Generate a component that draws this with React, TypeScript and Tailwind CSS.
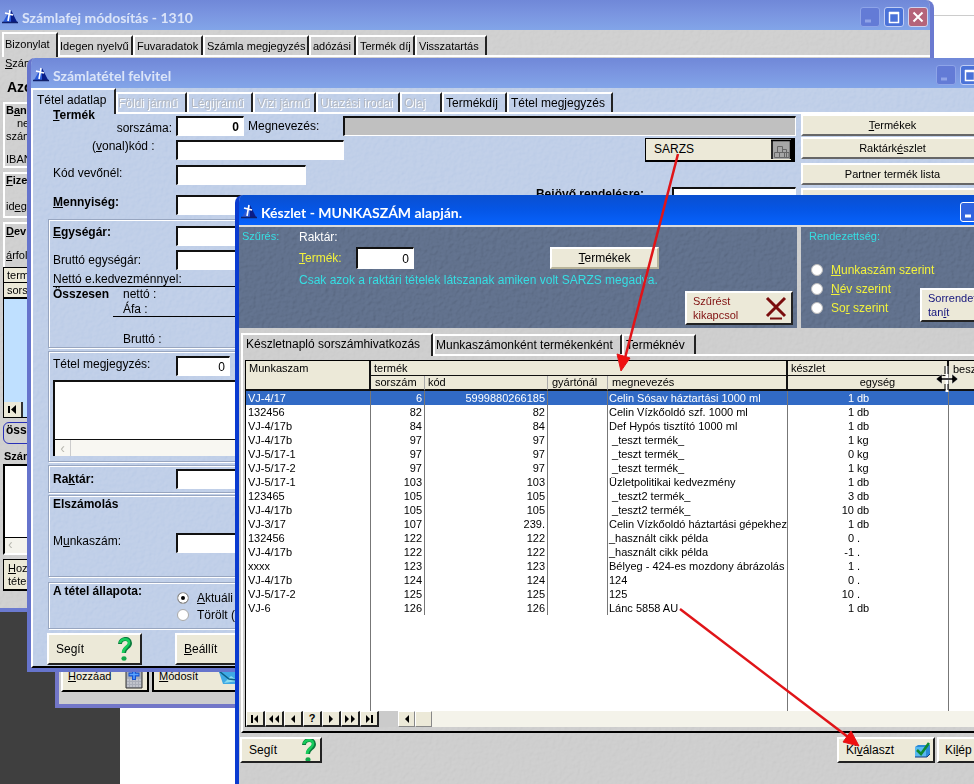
import { useState } from 'react';
import type { ReactNode } from 'react';
import clsx from 'clsx';

type StockRow = {
  job: string;
  no: string;
  code: string;
  name: string;
  qty: string;
  unit: string;
};

const rows: StockRow[] = [
  { job: 'VJ-4/17', no: '6', code: '5999880266185', name: 'Celin Sósav háztartási 1000 ml', qty: '1', unit: 'db' },
  { job: '132456', no: '82', code: '82', name: 'Celin Vízkőoldó szf. 1000 ml', qty: '1', unit: 'db' },
  { job: 'VJ-4/17b', no: '84', code: '84', name: 'Def Hypós tisztító 1000 ml', qty: '1', unit: 'db' },
  { job: 'VJ-4/17b', no: '97', code: '97', name: ' _teszt termék_', qty: '1', unit: 'kg' },
  { job: 'VJ-5/17-1', no: '97', code: '97', name: ' _teszt termék_', qty: '0', unit: 'kg' },
  { job: 'VJ-5/17-2', no: '97', code: '97', name: ' _teszt termék_', qty: '1', unit: 'kg' },
  { job: 'VJ-5/17-1', no: '103', code: '103', name: 'Üzletpolitikai kedvezmény', qty: '1', unit: 'db' },
  { job: '123465', no: '105', code: '105', name: ' _teszt2 termék_', qty: '3', unit: 'db' },
  { job: 'VJ-4/17b', no: '105', code: '105', name: ' _teszt2 termék_', qty: '10', unit: 'db' },
  { job: 'VJ-3/17', no: '107', code: '239.', name: 'Celin Vízkőoldó háztartási gépekhez', qty: '1', unit: 'db' },
  { job: '132456', no: '122', code: '122', name: '_használt cikk példa', qty: '0', unit: '.' },
  { job: 'VJ-4/17b', no: '122', code: '122', name: '_használt cikk példa', qty: '-1', unit: '.' },
  { job: 'xxxx', no: '123', code: '123', name: 'Bélyeg - 424-es mozdony ábrázolás', qty: '1', unit: '.' },
  { job: 'VJ-4/17b', no: '124', code: '124', name: '124', qty: '0', unit: '.' },
  { job: 'VJ-5/17-2', no: '125', code: '125', name: '125', qty: '10', unit: '.' },
  { job: 'VJ-6', no: '126', code: '126', name: 'Lánc 5858 AU', qty: '1', unit: 'db' },
];

const raised =
  'bg-[#ece9d8] border-t-2 border-l-2 border-white border-r-2 border-b-2 border-r-[#222] border-b-[#222]';
const sunken =
  'bg-white border-t-2 border-l-2 border-t-[#111] border-l-[#111] border-r border-b border-r-white border-b-white rounded-none px-1 outline-none';

// embossed paper look of the window backgrounds
function Texture({ id }: { id: string }) {
  return (
    <svg className="absolute inset-0 -z-10 h-full w-full opacity-15 mix-blend-overlay" aria-hidden="true">
      <filter id={id}>
        <feTurbulence type="fractalNoise" baseFrequency="0.25" numOctaves="2" seed="4" />
        <feDiffuseLighting lightingColor="#fff" surfaceScale="1.5" diffuseConstant="0.7">
          <feDistantLight azimuth="225" elevation="45" />
        </feDiffuseLighting>
      </filter>
      <rect width="100%" height="100%" filter={`url(#${id})`} />
    </svg>
  );
}

function AppIcon() {
  return (
    <svg width="16" height="16" viewBox="0 0 16 16" className="shrink-0">
      <path d="M8 1 L15 13 L1 13 Z" fill="#2a5ad8" />
      <path d="M9 1 L15 13 L9 13 Z" fill="#0a1d88" />
      <path d="M8 1 L6 12 M3 4 L11 6" stroke="#fff" strokeWidth="1.6" />
      <path d="M0 13.5 H16" stroke="#10206a" strokeWidth="1.5" />
    </svg>
  );
}

function QuestionIcon() {
  return (
    <svg width="14" height="25" viewBox="0 0 14 25" className="shrink-0">
      <path d="M2 7 C2 1 12 0 12 6 C12 11 6 10 6 16" fill="none" stroke="#0a7a3c" strokeWidth="4" />
      <path d="M2 6 C3 1 11 1 11 6 C11 10 5 10 5 16" fill="none" stroke="#18cc5c" strokeWidth="2.6" />
      <ellipse cx="6" cy="21.5" rx="2.6" ry="2.2" fill="#12a84a" />
    </svg>
  );
}

function CheckIcon() {
  return (
    <svg width="17" height="16" viewBox="0 0 17 16" className="shrink-0">
      <path d="M1 5 L4 3 H16 V12 L13 15 H1 Z" fill="#2a8ad8" />
      <path d="M1 5 H12 V15 H1 Z" fill="#58b8f0" />
      <path d="M1 15 H13 L16 12" fill="none" stroke="#123c80" />
      <path d="M3 8 L7 12 L15 1" fill="none" stroke="#0c8a30" strokeWidth="2.6" />
    </svg>
  );
}

function WindowButton({ kind, active }: { kind: 'min' | 'max' | 'close'; active?: boolean }) {
  return (
    <button
      type="button"
      aria-label={kind}
      className={clsx(
        'size-5 shrink-0 rounded-[3px] border flex items-center justify-center',
        active ? 'border-white bg-[#2f64e0]' : kind === 'close' ? 'border-[#d0d4f0] bg-[#b5647a]' : kind === 'max' ? 'border-[#c0cdf4] bg-[#4a72d8]' : 'border-[#8ea4e8] bg-[#637bd6]',
      )}
    >
      <svg width="14" height="14" viewBox="0 0 14 14" fill="none" stroke={kind === 'min' && !active ? '#90a4e8' : '#fff'}>
        {kind === 'min' && <path d="M2 11 H8" strokeWidth="3" />}
        {kind === 'max' && <path d="M2 3 H12 M2.5 2 V12.5 H11.5 V2" strokeWidth="1.5" />}
        {kind === 'max' && <path d="M2 3 H12" strokeWidth="2.5" />}
        {kind === 'close' && <path d="M2.5 2.5 L11.5 11.5 M11.5 2.5 L2.5 11.5" strokeWidth="2" />}
      </svg>
    </button>
  );
}

function TitleBar({ title, active }: { title: string; active?: boolean }) {
  return (
    <div
      className={clsx(
        'flex h-[30px] shrink-0 items-center gap-1 pt-1 pl-[2px] font-[Lato,sans-serif] text-[14px] font-bold',
        active
          ? 'bg-linear-to-b from-[#0a4fd0] via-[#0556e6] to-[#0762fc] text-white'
          : 'bg-linear-to-b from-[#7088d8] via-[#7b96e1] to-[#82a5e8] text-[#dbe4f8]',
      )}
    >
      <AppIcon />
      <h2 className="flex-1 whitespace-nowrap">{title}</h2>
      <div className="flex gap-1 pr-[2px]">
        <WindowButton kind="min" active={active} />
        <WindowButton kind="max" active={active} />
        <WindowButton kind="close" />
      </div>
    </div>
  );
}

function Tab({ children, className, disabled, small }: { children: ReactNode; className: string; disabled?: boolean; small?: boolean }) {
  return (
    <button
      type="button"
      disabled={disabled}
      className={clsx(
        'h-5 shrink-0 whitespace-nowrap border-t-2 border-l-2 border-r-2 border-white border-r-[#222] text-left leading-4',
        small ? 'text-[11px]' : 'text-[12px]',
        disabled && 'text-[#b3b9c3] [text-shadow:1px_1px_0_#fff]',
        className,
      )}
    >
      {children}
    </button>
  );
}

function InvoiceHeadWindow() {
  return (
    <section className="absolute top-0 right-10 left-0 isolate flex h-[612px] flex-col overflow-hidden rounded-tr-lg border-r-4 border-b-4 border-[#6b7ad0] bg-[#cdcdcd]">
      <Texture id="tex-head" />
      <TitleBar title="Számlafej módosítás - 1310" />
      <div className="flex h-[27px] shrink-0 pt-[2px] pl-[2px]">
        <button type="button" className="flex w-[56px] items-start border-t-2 border-l-2 border-r-2 border-white border-r-[#222] pl-px text-left text-[11px] leading-5">
          Bizonylat
        </button>
        <div className="flex flex-1 items-end border-b-2 border-white">
          <Tab small className="w-[75px]">Idegen nyelvű</Tab>
          <Tab small className="w-[70px] pl-[2px]">Fuvaradatok</Tab>
          <Tab small className="w-[106px] pl-[2px]">Számla megjegyzés</Tab>
          <Tab small className="w-[47px] pl-[2px]">adózási</Tab>
          <Tab small className="w-[59px] pl-[2px]">Termék díj</Tab>
          <Tab small className="w-[72px] pl-[2px]">Visszatartás</Tab>
        </div>
      </div>
      <div className="flex w-20 flex-col pl-[3px]">
        <p className="h-[22px] pl-[2px] leading-3"><u>S</u>zám</p>
        <p className="h-[23px] pl-1 text-[14px] font-bold leading-4">Azo</p>
        <div className="flex h-[66px] flex-col border-2 border-white leading-[13px]">
          <b className="pl-px">B<u>a</u>nk</b>
          <span className="pl-3">nev</span>
          <span className="h-[23px] pl-px">szám</span>
          <span className="pl-px">IBAN</span>
        </div>
        <div className="mt-1 flex h-[46px] flex-col border-2 border-white leading-[13px]">
          <b className="h-[26px] pl-px"><u>F</u>izet</b>
          <span className="pl-px">id<u>e</u>ge</span>
        </div>
        <div className="mt-1 flex h-[45px] flex-col border-2 border-b-0 border-white leading-[14px]">
          <b className="h-[24px] pl-px"><u>D</u>evi</b>
          <span className="pl-px"><u>á</u>rfol</span>
        </div>
        <div className="flex h-[151px] flex-col border border-black bg-[#bfe0ff]">
          <div className="border-b border-black bg-[#ece9d8] pl-[3px] leading-[14px]">termék</div>
          <div className="border-b-2 border-black bg-[#ece9d8] pl-[3px] leading-[14px]">sorsz</div>
          <span className="flex-1" />
          <button type="button" aria-label="első" className="h-[15px] w-[19px] border-r-2 border-[#333] bg-[#ece9d8]">
            <svg width="12" height="9" viewBox="0 0 12 9" className="mx-auto"><path d="M2 1V8" stroke="#000" strokeWidth="2" /><path d="M9 0V9L4 4.500Z" /></svg>
          </button>
        </div>
        <b className="mt-1 h-[22px] rounded-md border border-[#2830b8] pl-[2px] text-[12px] leading-[14px]">össz</b>
        <b className="mt-1.5 h-[14px] pl-px leading-3">Szám</b>
        <div className="flex h-[91px] flex-col border-2 border-black border-r-white border-b-white bg-white">
          <span className="flex-1" />
          <span className="h-4 border-t border-black bg-[#f4f3ec] pl-[3px] text-[14px] leading-3 text-[#b8b8b0]">‹</span>
        </div>
        <button type="button" className="mt-1 h-8 border-t border-b-2 border-l border-black bg-[#ece9d8] pl-1 text-left leading-[13px]">
          <u>H</u>ozz<br />tétel
        </button>
      </div>
    </section>
  );
}

function InvoiceListWindow() {
  return (
    <section className="absolute top-[620px] left-[55px] flex h-[88px] w-96 items-end border-4 border-[#7276c8] bg-[#cdcdcd] pb-3 pl-0.5">
      <button type="button" className="flex h-9 w-[88px] items-center justify-between border-2 border-white border-r-black border-b-black bg-[#ece9d8] pr-1 pl-[5px] pt-1 text-[11px]">
        <span><u>H</u>ozzáad</span>
        <svg width="18" height="25" viewBox="0 0 18 25"><path d="M1 0H17V24H1Z" fill="#a9adb8" stroke="#333" /><path d="M2 16H16M2 19H16M2 22H16" stroke="#d8dae0" strokeDasharray="2 1" /><path d="M9 5V16M3.500 10.500H14.500" stroke="#1450d0" strokeWidth="4" /><path d="M9 6V15M4.500 10.500H13.500" stroke="#5aa4ff" strokeWidth="1.5" /></svg>
      </button>
      <button type="button" className="ml-[3px] flex h-9 w-[100px] items-center justify-between border-2 border-white border-l-black border-b-black bg-[#ece9d8] pt-1 pr-3 pl-[5px] text-[11px]">
        <span><u>M</u>ódosít</span>
        <svg width="20" height="18" viewBox="0 0 20 18"><path d="M1 5H20V17H5Z" fill="#3fa9e4" /><path d="M6 16L13 9L20 14" fill="#8adcf0" /><path d="M1 4L11 12L19 13" fill="none" stroke="#0c5f84" strokeWidth="1.5" /></svg>
      </button>
    </section>
  );
}

const group = 'ml-[15px] flex flex-col border border-[#98a6c0] shadow-[inset_1px_1px_0_#fff,1px_1px_0_#fff]';

function ItemWindow() {
  const [status, setStatus] = useState('aktualis');

  return (
    <section className="absolute top-[58px] -right-9 left-[27px] isolate flex h-[614px] flex-col overflow-hidden rounded-t-lg border-r-4 border-b-4 border-l-4 border-[#6674cc] bg-[#bccce7] text-[12px]">
      <Texture id="tex-item" />
      <TitleBar title="Számlatétel felvitel" />
      <div className="flex h-[26px] shrink-0 border-l-2 border-white">
        <button type="button" className="flex w-[83px] items-start border-t-2 border-r-2 border-white border-r-[#222] pl-1 text-left leading-5">
          Tétel adatlap
        </button>
        <div className="flex flex-1 items-end border-b-2 border-white">
          <Tab className="w-[71px]" disabled>Földi jármű</Tab>
          <Tab className="w-[66px] pl-0.5" disabled>Légijrámű</Tab>
          <Tab className="w-[63px] pl-0.5" disabled>Vizi jármű</Tab>
          <Tab className="w-[84px] pl-0.5" disabled>Utazási irodai</Tab>
          <Tab className="w-[42px] pl-0.5" disabled>Olaj</Tab>
          <Tab className="w-[65px] pl-0.5">Termékdíj</Tab>
          <Tab className="w-[106px] pl-0.5">Tétel megjegyzés</Tab>
        </div>
      </div>

      <div className="flex flex-1">
        <div className="flex w-[765px] shrink-0 flex-col border-b-2 border-l-2 border-white border-b-black">
          <div className="flex h-[22px] shrink-0 items-start pt-0.5">
            <div className="flex h-[18px] w-[143px] flex-col justify-end pr-1">
              <b className="pl-[20px] leading-[13px]"><u>T</u>ermék</b>
              <label htmlFor="sorszam" className="text-right leading-[12px]">sorszáma:</label>
            </div>
            <input id="sorszam" defaultValue="0" className={clsx(sunken, 'h-5 w-[68px] text-right font-bold')} />
            <label htmlFor="megnevezes" className="w-[99px] pl-1 leading-5">Megnevezés:</label>
            <input id="megnevezes" readOnly className="h-5 flex-1 border-t-2 border-r border-b border-l-2 border-[#111] border-r-white border-b-white bg-[#c0c0c0] outline-none" />
          </div>
          <div className="flex h-[27px] shrink-0 items-center">
            <label htmlFor="kod" className="w-[143px] pb-2 pl-[59px]">(<u>v</u>onal)kód :</label>
            <input id="kod" className={clsx(sunken, 'h-5 w-[168px]')} />
            <button type="button" className="mr-px ml-auto flex h-6 w-[150px] items-center justify-between border-t border-r-4 border-b-2 border-l border-black bg-[#ece9d8] pl-2">
              SARZS
              <svg width="20" height="20" viewBox="0 0 20 20"><path d="M0 0H20V20H0Z" fill="#a6a6a6" /><path d="M0 1.500H20M1 1V20M19.500 1V20" stroke="#000" strokeWidth="1.5" /><path d="M6.500 7.500H11.500V13.500H6.500ZM3.500 13.500H8.500V18.500H3.500ZM8.500 13.500H13.500V18.500H8.500ZM11.500 10.500H15.500V18.500M13.500 13.500H18V18.500H13.500Z" fill="none" stroke="#666" /></svg>
            </button>
          </div>
          <div className="flex h-6 shrink-0 items-center">
            <label htmlFor="kodvevo" className="w-[143px] pb-1 pl-[20px]">Kód vevőnél:</label>
            <input id="kodvevo" className={clsx(sunken, 'h-5 w-[130px]')} />
          </div>
          <div className="flex h-[31px] shrink-0 items-start">
            <label htmlFor="menny" className="w-[143px] pl-[20px] font-bold leading-[30px]"><u>M</u>ennyiség:</label>
            <input id="menny" className={clsx(sunken, 'mt-2 h-5 w-[130px]')} />
            <label htmlFor="rendeles" className="mr-7 ml-auto font-bold leading-[14px]">Bejövő rendelésre:</label>
            <input id="rendeles" className={clsx(sunken, 'h-5 w-[124px]')} />
          </div>

          <div className={clsx(group, 'mt-[1px] h-[129px]')}>
            <div className="flex h-7 items-center pt-1">
              <label htmlFor="ear" className="w-[127px] pb-2 pl-1 font-bold"><u>E</u>gységár:</label>
              <input id="ear" className={clsx(sunken, 'h-5 w-[130px]')} />
            </div>
            <div className="flex h-[26px] items-center">
              <label htmlFor="bear" className="w-[127px] pl-1">Bruttó egységár:</label>
              <input id="bear" className={clsx(sunken, 'h-5 w-[130px]')} />
            </div>
            <p className="ml-1 border-b border-black leading-[14px]">Nettó e.kedvezménnyel:</p>
            <p className="flex pl-1 leading-[15px]"><b className="w-[70px]">Összesen</b>nettó :</p>
            <p className="ml-[64px] border-b border-black pl-[10px] leading-[14px]">Áfa :</p>
            <p className="pt-[14px] pl-[74px] leading-4">Bruttó :</p>
          </div>

          <div className={clsx(group, 'mt-[3px] h-[111px]')}>
            <div className="flex h-7 items-center">
              <label htmlFor="megj" className="w-[127px] pb-1 pl-1">Tétel meg<u>j</u>egyzés:</label>
              <input id="megj" defaultValue="0" className={clsx(sunken, 'h-5 w-[54px] text-right')} />
            </div>
            <textarea aria-label="Tétel megjegyzés" className="mx-1 h-[60px] resize-none border-t-2 border-b border-l-2 border-[#111] bg-white" />
            <div className="mx-1 h-4 border-l-2 border-black bg-[#f8f7f2]">
              <span className="flex h-4 w-4 items-center justify-center border-r border-[#ccc] text-[14px] text-[#b8b8b0]">‹</span>
            </div>
          </div>

          <div className={clsx(group, 'mt-[3px] h-7 justify-center')}>
            <div className="flex items-center">
              <label htmlFor="raktar" className="w-[127px] pl-1 font-bold">Ra<u>k</u>tár:</label>
              <input id="raktar" className={clsx(sunken, 'h-5 w-[130px]')} />
            </div>
          </div>

          <div className={clsx(group, 'mt-[2px] h-[82px]')}>
            <b className="h-9 pl-1 leading-4">Elszámolás</b>
            <div className="flex items-center">
              <label htmlFor="munka" className="w-[127px] pb-1 pl-1">M<u>u</u>nkaszám:</label>
              <input id="munka" className={clsx(sunken, 'h-5 w-[130px]')} />
            </div>
          </div>

          <fieldset className={clsx(group, 'mt-[5px] h-[47px]')}>
            <div className="flex">
              <b className="w-[128px] pl-1 leading-4">A tétel állapota:</b>
              <div className="flex flex-col pt-[6px]">
                {[
                  { id: 'aktualis', label: <><u>A</u>ktuáli</> },
                  { id: 'torolt', label: <>Törölt (</> },
                ].map((s) => (
                  <label key={s.id} className="flex h-[17px] items-center gap-2">
                    <input
                      type="radio"
                      name="allapot"
                      checked={status === s.id}
                      onChange={() => setStatus(s.id)}
                      className="size-3 appearance-none rounded-full border border-[#aaa] bg-white checked:bg-black checked:shadow-[inset_0_0_0_3px_#fff]"
                    />
                    <span>{s.label}</span>
                  </label>
                ))}
              </div>
            </div>
          </fieldset>

          <div className="mt-1 flex gap-[33px] pl-[14px]">
            <button type="button" className={clsx(raised, 'flex h-8 w-[95px] items-center justify-between pr-2 pl-[7px]')}>
              Segít <QuestionIcon />
            </button>
            <button type="button" className={clsx(raised, 'h-8 w-[95px] pl-[7px] text-left')}><u>B</u>eállít</button>
          </div>
        </div>

        <div className="flex w-[188px] flex-col pl-[5px] text-[11px]">
          {[
            { id: 1, gap: '', label: <><u>T</u>ermékek</> },
            { id: 2, gap: 'mt-[1px]', label: <>Raktárk<u>é</u>szlet</> },
            { id: 3, gap: 'mt-1', label: <>Partner termék lista</> },
            { id: 4, gap: 'mt-[3px]', label: <>Rendelések</> },
          ].map((b) => (
            <button key={b.id} type="button" className={clsx('h-[22px] border-2 border-white border-r-[#555] border-b-[#666] bg-[#ece9d8] leading-4', b.gap)}>
              {b.label}
            </button>
          ))}
        </div>
      </div>
    </section>
  );
}

const navIcons = [
  { id: 'first', d: 'M2 0H4V8H2ZM9 0V8L5 4Z' },
  { id: 'pgup', d: 'M5 0V8L1 4ZM11 0V8L7 4Z' },
  { id: 'prev', d: 'M8 0V8L4 4Z' },
  { id: 'find', d: '' },
  { id: 'next', d: 'M4 0V8L8 4Z' },
  { id: 'pgdn', d: 'M1 0V8L5 4ZM7 0V8L11 4Z' },
  { id: 'last', d: 'M3 0V8L7 4ZM8 0H10V8H8Z' },
];

function StockTable() {
  const [selected, setSelected] = useState(0);
  const head = 'border-r-2 border-[#111] text-left font-normal';
  const sub = 'border-r border-[#aaa] border-b-2 border-b-[#111] text-left font-normal';

  return (
    <table className="h-full w-full table-fixed border-separate border-spacing-0 text-[11px] leading-[14px]">
      <colgroup>
        <col className="w-[125px]" />
        <col className="w-[54px]" />
        <col className="w-[123px]" />
        <col className="w-[60px]" />
        <col className="w-[180px]" />
        <col className="w-[66px]" />
        <col className="w-[95px]" />
        <col />
      </colgroup>
      <thead className="bg-[#ece9d8]">
        <tr className="h-[15px]">
          <th rowSpan={2} className={clsx(head, 'border-b-2 pl-[3px] align-top')}>Munkaszam</th>
          <th colSpan={4} className={clsx(head, 'border-b pl-[3px]')}>termék</th>
          <th colSpan={2} className={clsx(head, 'border-b pl-[3px]')}>készlet</th>
          <th className="pl-1 text-left font-normal">besz</th>
        </tr>
        <tr className="h-[15px] leading-[13px]">
          <th className={clsx(sub, 'pl-1')}>sorszám</th>
          <th className={clsx(sub, 'pl-[3px]')}>kód</th>
          <th className={clsx(sub, 'pl-1')}>gyártónál</th>
          <th className="border-r-2 border-b-2 border-[#111] pl-1 text-left font-normal">megnevezés</th>
          <th colSpan={2} className="border-r-2 border-b-2 border-[#111] pl-5 text-center font-normal">egység</th>
          <th className="border-b-2 border-[#111]" />
        </tr>
      </thead>
      <tbody>
        {rows.map((r, i) => (
          <tr
            key={i}
            onClick={() => setSelected(i)}
            className={clsx('h-[14px] whitespace-pre', selected === i && 'bg-[#316ac5] text-white')}
          >
            <td className="border-r border-[#777] pl-[2px]">{r.job}</td>
            <td className="border-r border-[#777] pr-[2px] text-right">{r.no}</td>
            <td className="border-r border-[#777] pr-[2px] text-right">{r.code}</td>
            <td className="border-r border-[#777]" />
            <td className="border-r border-[#777] pl-px">{r.name}</td>
            <td className="text-right">{r.qty}</td>
            <td className="border-r border-[#777] pl-[3px]">{r.unit}</td>
            <td />
          </tr>
        ))}
        <tr>
          <td className="border-r border-[#777]" />
          <td colSpan={4} className="border-r border-[#777]" />
          <td colSpan={2} className="border-r border-[#777]" />
          <td />
        </tr>
      </tbody>
    </table>
  );
}

function StockWindow() {
  const [sort, setSort] = useState('');

  return (
    <section className="absolute top-[195px] -right-[60px] bottom-0 left-[235px] isolate flex flex-col overflow-hidden rounded-t-lg border-r-4 border-l-4 border-[#0a3bd0] bg-[#cbcbcb] text-[12px]">
      <Texture id="tex-stock" />
      <TitleBar title="Készlet - MUNKASZÁM alapján." active />

      <div className="flex h-[103px] shrink-0 gap-1 border-t-2 border-[#dcdcdc]">
        <div className="relative isolate flex w-[558px] shrink-0 bg-[#5b6a84]">
          <Texture id="tex-filter" />
          <div className="w-[60px] pt-px pl-[3px] text-[11px] text-[#35dfe4]">Szűrés:</div>
          <div className="flex flex-1 flex-col">
            <p className="h-5 leading-5 text-white">Raktár:</p>
            <div className="flex h-[22px] items-center">
              <label htmlFor="szuro" className="w-[57px] text-[#f2f23c]"><u>T</u>ermék:</label>
              <input id="szuro" defaultValue="0" className={clsx(sunken, 'h-[22px] w-[58px] text-right')} />
              <button type="button" className="ml-[136px] h-[22px] w-[109px] border-2 border-white border-r-[#b8b49a] border-b-[#b8b49a] bg-[#ece9d8] leading-4">
                <u>T</u>ermékek
              </button>
            </div>
            <p className="h-[22px] pt-[2px] whitespace-nowrap text-[#35dfe4]">Csak azok a raktári tételek látszanak amiken volt SARZS megadva.</p>
            <button type="button" className={clsx(raised, 'mr-1 ml-auto flex h-[34px] w-[108px] shrink-0 items-center justify-between pr-1 pl-[6px] text-left text-[11px] leading-[14px] text-[#801010]')}>
              <span>Szűrést<br />kikapcsol</span>
              <svg width="22" height="24" viewBox="0 0 22 24" fill="none" stroke="#7a0d0d"><path d="M2 2L20 20M20 2L2 20" strokeWidth="3" /><path d="M5 22.500H17" strokeWidth="2" /></svg>
            </button>
          </div>
        </div>
        <div className="relative isolate flex flex-1 flex-col bg-[#5b6a84]">
          <Texture id="tex-sort" />
          <p className="h-[33px] pt-px pl-2 text-[11px] text-[#35dfe4]">Rendezettség:</p>
          <div className="flex">
            <div className="flex w-[119px] flex-col pl-[10px] text-[#f2f23c]">
              {[
                { id: 'munka', label: <><u>M</u>unkaszám szerint</> },
                { id: 'nev', label: <><u>N</u>év szerint</> },
                { id: 'sor', label: <>So<u>r</u> szerint</> },
              ].map((o) => (
                <label key={o.id} className="flex h-[19px] items-center gap-2 whitespace-nowrap">
                  <input
                    type="radio"
                    name="rendezes"
                    checked={sort === o.id}
                    onChange={() => setSort(o.id)}
                    className="size-3 shrink-0 appearance-none rounded-full border border-[#bbb] bg-white checked:bg-black checked:shadow-[inset_0_0_0_3px_#fff]"
                  />
                  <span>{o.label}</span>
                </label>
              ))}
            </div>
            <button type="button" className={clsx(raised, 'mt-7 h-[34px] w-[96px] pl-[6px] text-left text-[11px] leading-[14px] text-[#14147c]')}>
              Sorrendet<br />tan<u>í</u>t
            </button>
          </div>
        </div>
      </div>

      <div className="ml-[2px] flex h-7 shrink-0 pt-[5px]">
        <button type="button" className="flex w-[192px] items-start border-t-2 border-l-2 border-r-2 border-white border-r-[#222] pl-[3px] text-left leading-[18px]">
          Készletnapló sorszámhivatkozás
        </button>
        <div className="flex flex-1 items-end border-b-2 border-white">
          <Tab className="w-[189px] pl-px">Munkaszámonként termékenként</Tab>
          <Tab className="w-[74px] pl-[2px]">Terméknév</Tab>
        </div>
      </div>

      <div className="ml-[2px] flex flex-1 flex-col border-b-2 border-l-2 border-l-white border-b-black pt-1 pb-1 pl-[2px]">
        <div className="flex-1 border-t border-l border-black bg-white">
          <StockTable />
        </div>
        <div className="flex h-4 shrink-0 border-l border-black bg-[#f4f3ea]">
          {navIcons.map((n) => (
            <button key={n.id} type="button" aria-label={n.id} className="flex w-[19px] items-center justify-center border border-white border-r-2 border-b-2 border-r-[#222] border-b-[#222] bg-[#ece9d8] text-[11px] font-bold">
              {n.d ? <svg width="12" height="8" viewBox="0 0 12 8"><path d={n.d} /></svg> : '?'}
            </button>
          ))}
          <span className="w-[19px] bg-[#cbcbcb]" />
          <button type="button" aria-label="balra" className="flex w-[17px] items-center justify-center border border-white border-r-[#888] border-b-[#888] bg-[#ece9d8]">
            <svg width="12" height="8" viewBox="0 0 12 8"><path d="M8 0V8L4 4Z" /></svg>
          </button>
          <span className="w-[17px] border border-white border-r-[#888] border-b-[#888] bg-[#ece9d8]" />
        </div>
      </div>

      <div className="flex h-[51px] shrink-0 items-start pt-1 pl-px">
        <button type="button" className={clsx(raised, 'flex h-[26px] w-[82px] items-center justify-between overflow-hidden pr-1 pl-[7px]')}>
          Segít <QuestionIcon />
        </button>
        <button type="button" className={clsx(raised, 'ml-[515px] flex h-[26px] w-[98px] items-center justify-between pr-[2px] pl-[7px]')}>
          <span>Ki<u>v</u>álaszt</span> <CheckIcon />
        </button>
        <button type="button" className={clsx(raised, 'ml-[2px] h-[26px] w-[82px] pl-[6px] text-left')}>Ki<u>l</u>ép</button>
      </div>
    </section>
  );
}

export default function App() {
  return (
    <main className="relative h-screen min-h-[784px] overflow-hidden bg-white font-['Liberation_Sans',sans-serif] text-[11px] text-black">
      {/* desktop behind the windows */}
      <div className="absolute top-[600px] bottom-0 left-0 w-[120px] bg-[#3f3f3f]" />
      <div className="absolute top-[15px] right-0 h-px w-10 bg-[#ccc]" />

      <InvoiceListWindow />
      <InvoiceHeadWindow />
      <ItemWindow />
      <StockWindow />

      {/* red arrows and the resize cursor */}
      <svg className="pointer-events-none absolute top-0 left-0" width="974" height="784" viewBox="0 0 974 784">
        <g stroke="#e01418" strokeWidth="2.5" fill="#f01010">
          <path d="M678 154 L625 358" />
          <path d="M680 609 L848 737" />
          <path d="M621 371 L617 354 L630 358 Z" strokeWidth="1" />
          <path d="M859 746 L843 742 L851 731 Z" strokeWidth="1" />
        </g>
        <path d="M947 366 V392" stroke="#fff" strokeWidth="3" />
        <path d="M945 366 V374 M948 366 V374 M945 384 V390 M948 384 V390" stroke="#000" />
        <path d="M936 379 L942 374 V378 H952 V374 L958 379 L952 384 V380 H942 V384 Z" stroke="#fff" strokeWidth="0.5" />
      </svg>
    </main>
  );
}
